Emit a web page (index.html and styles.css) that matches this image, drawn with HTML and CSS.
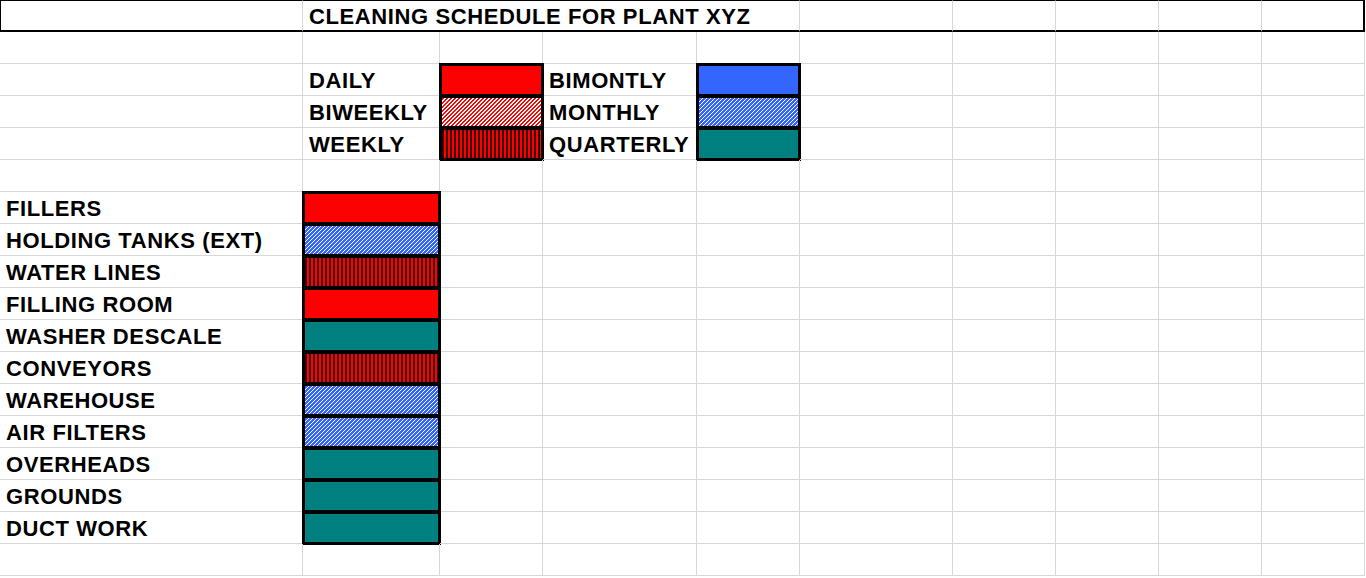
FILE: index.html
```html
<!DOCTYPE html>
<html lang="en">
<head>
<meta charset="utf-8">
<title>Cleaning Schedule for Plant XYZ</title>
<link rel="stylesheet" href="styles.css">
</head>
<body>
<div class="sheet">
  <!-- row 1: title -->
  <div class="c t t-first"></div><div class="c t t-merge">CLEANING SCHEDULE FOR PLANT XYZ</div><div class="c t"></div><div class="c t"></div><div class="c t"></div><div class="c t"></div><div class="c t t-last"></div>
  <!-- row 2 -->
  <div class="c"></div><div class="c"></div><div class="c"></div><div class="c"></div><div class="c"></div><div class="c"></div><div class="c"></div><div class="c"></div><div class="c"></div><div class="c"></div>
  <!-- row 3 -->
  <div class="c"></div><div class="c">DAILY</div><div class="c box daily"></div><div class="c">BIMONTLY</div><div class="c box bimonthly"></div><div class="c"></div><div class="c"></div><div class="c"></div><div class="c"></div><div class="c"></div>
  <!-- row 4 -->
  <div class="c"></div><div class="c">BIWEEKLY</div><div class="c box biweekly"></div><div class="c">MONTHLY</div><div class="c box monthly"></div><div class="c"></div><div class="c"></div><div class="c"></div><div class="c"></div><div class="c"></div>
  <!-- row 5 -->
  <div class="c"></div><div class="c">WEEKLY</div><div class="c box weekly"></div><div class="c">QUARTERLY</div><div class="c box quarterly"></div><div class="c"></div><div class="c"></div><div class="c"></div><div class="c"></div><div class="c"></div>
  <!-- row 6 -->
  <div class="c"></div><div class="c"></div><div class="c"></div><div class="c"></div><div class="c"></div><div class="c"></div><div class="c"></div><div class="c"></div><div class="c"></div><div class="c"></div>
  <!-- rows 7-17: schedule -->
  <div class="c">FILLERS</div><div class="c box daily"></div><div class="c"></div><div class="c"></div><div class="c"></div><div class="c"></div><div class="c"></div><div class="c"></div><div class="c"></div><div class="c"></div>
  <div class="c">HOLDING TANKS (EXT)</div><div class="c box monthly"></div><div class="c"></div><div class="c"></div><div class="c"></div><div class="c"></div><div class="c"></div><div class="c"></div><div class="c"></div><div class="c"></div>
  <div class="c">WATER LINES</div><div class="c box weekly"></div><div class="c"></div><div class="c"></div><div class="c"></div><div class="c"></div><div class="c"></div><div class="c"></div><div class="c"></div><div class="c"></div>
  <div class="c">FILLING ROOM</div><div class="c box daily"></div><div class="c"></div><div class="c"></div><div class="c"></div><div class="c"></div><div class="c"></div><div class="c"></div><div class="c"></div><div class="c"></div>
  <div class="c">WASHER DESCALE</div><div class="c box quarterly"></div><div class="c"></div><div class="c"></div><div class="c"></div><div class="c"></div><div class="c"></div><div class="c"></div><div class="c"></div><div class="c"></div>
  <div class="c">CONVEYORS</div><div class="c box weekly"></div><div class="c"></div><div class="c"></div><div class="c"></div><div class="c"></div><div class="c"></div><div class="c"></div><div class="c"></div><div class="c"></div>
  <div class="c">WAREHOUSE</div><div class="c box monthly"></div><div class="c"></div><div class="c"></div><div class="c"></div><div class="c"></div><div class="c"></div><div class="c"></div><div class="c"></div><div class="c"></div>
  <div class="c">AIR FILTERS</div><div class="c box monthly"></div><div class="c"></div><div class="c"></div><div class="c"></div><div class="c"></div><div class="c"></div><div class="c"></div><div class="c"></div><div class="c"></div>
  <div class="c">OVERHEADS</div><div class="c box quarterly"></div><div class="c"></div><div class="c"></div><div class="c"></div><div class="c"></div><div class="c"></div><div class="c"></div><div class="c"></div><div class="c"></div>
  <div class="c">GROUNDS</div><div class="c box quarterly"></div><div class="c"></div><div class="c"></div><div class="c"></div><div class="c"></div><div class="c"></div><div class="c"></div><div class="c"></div><div class="c"></div>
  <div class="c">DUCT WORK</div><div class="c box quarterly"></div><div class="c"></div><div class="c"></div><div class="c"></div><div class="c"></div><div class="c"></div><div class="c"></div><div class="c"></div><div class="c"></div>
  <!-- row 18 -->
  <div class="c"></div><div class="c"></div><div class="c"></div><div class="c"></div><div class="c"></div><div class="c"></div><div class="c"></div><div class="c"></div><div class="c"></div><div class="c"></div>
</div>
</body>
</html>
```

FILE: styles.css
```css
* { box-sizing: border-box; }

html, body {
  margin: 0;
  padding: 0;
  background: #ffffff;
}

body {
  font-family: "Liberation Sans", Arial, sans-serif;
  color: #000000;
  overflow: hidden;
}

.sheet {
  display: grid;
  grid-template-columns: 303px 137px 103px 154px 103px 153px 103px 103px 103px 103px;
  grid-auto-rows: 32px;
  width: 1365px;
}

.c {
  border-right: 1px solid #d6d7dc;
  border-bottom: 1px solid #d6d7dc;
  padding: 4.6px 0 0 6px;
  font-size: 22px;
  font-weight: bold;
  letter-spacing: 0.6px;
  line-height: 24px;
  white-space: nowrap;
}

/* title row with its outer black frame */
.t {
  border-top: 1px solid #000;
  border-bottom: 2px solid #000;
  padding-top: 3.6px;
}
.t-first { border-left: 1px solid #000; }
.t-merge { grid-column: span 4; }
.t-last { border-right: 2px solid #000; }

/* coloured schedule boxes */
.box {
  outline: 3px solid #000;
  outline-offset: -2px;
}

.daily { background: #ff0000; }
.bimonthly { background: #3366ff; }
.quarterly { background: #008080; }

.biweekly {
  background: repeating-linear-gradient(135deg, #ff0000 0 1.6px, #ffffff 1.6px 2.83px);
}
.monthly {
  background: repeating-linear-gradient(135deg, #3366ff 0 2.2px, #ffffff 2.2px 2.83px);
}
.weekly {
  background: repeating-linear-gradient(90deg, #ff0000 0 2px, #3a0000 2px 4px);
}
```
